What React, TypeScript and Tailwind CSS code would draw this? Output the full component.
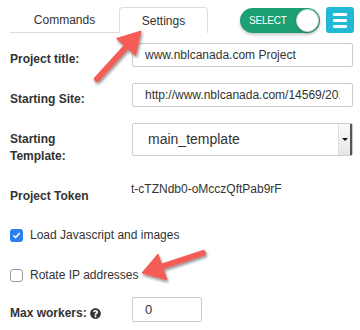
import { FaQuestionCircle } from 'react-icons/fa'

function Arrows() {
    return (
        <svg className="absolute inset-0 pointer-events-none" width={360} height={330} viewBox="0 0 360 330">
            <defs>
                <filter id="arrowShadow" x="-20%" y="-20%" width="140%" height="140%">
                    <feDropShadow dx="1" dy="2" stdDeviation="1.5" floodColor="#000" floodOpacity="0.45" />
                </filter>
            </defs>
            <g filter="url(#arrowShadow)" fill="#f45c57" stroke="#f45c57">
                {/* arrow to Settings tab */}
                <line x1={97} y1={79} x2={127} y2={46} strokeWidth={6} strokeLinecap="round" />
                <polygon points="141,31 135.5,55.5 116.5,38.5" strokeWidth={1} strokeLinejoin="round" />
                {/* arrow to Rotate IP */}
                <line x1={203} y1={253} x2={162} y2={266.5} strokeWidth={6} strokeLinecap="round" />
                <polygon points="142,273 158,254 167,280" strokeWidth={1} strokeLinejoin="round" />
            </g>
        </svg>
    )
}

export default function App() {
    return (
        <div
            className="relative w-[360px] h-[330px] overflow-hidden bg-white text-[#333] pt-[7px]"
            style={{ fontFamily: '"Liberation Sans", Arial, sans-serif' }}
        >
            {/* header */}
            <div className="flex items-start pl-[10px]">
                <div className="flex border-b border-[#ddd]">
                    <div className="w-[109px] h-[25px] flex items-center justify-center text-[12px]">Commands</div>
                    <div className="w-[89px] h-[26px] -mb-px flex items-center justify-center text-[12px] bg-white border border-b-0 border-[#ddd] rounded-t-[4px]">
                        Settings
                    </div>
                </div>
                <div className="ml-[32px] mt-[1px] w-[80px] h-[25px] rounded-full bg-[#1d9f74] flex items-center shadow-[0_2px_3px_rgba(0,0,0,0.2)]">
                    <span className="pl-[9px] text-[10px] text-white tracking-[-0.2px]">SELECT</span>
                    <span className="ml-auto mr-[1px] w-[23px] h-[23px] rounded-full bg-white border border-[#cfd8d4] shadow-[0_1px_2px_rgba(0,0,0,0.2)]" />
                </div>
                <button
                    type="button"
                    className="ml-[6px] w-[28px] h-[26px] rounded-[3px] bg-[#21b8d3] flex flex-col items-center justify-center gap-[3px]"
                >
                    <span className="w-[14px] h-[3px] bg-white rounded-[1px]" />
                    <span className="w-[14px] h-[3px] bg-white rounded-[1px]" />
                    <span className="w-[14px] h-[3px] bg-white rounded-[1px]" />
                </button>
            </div>

            {/* form */}
            <div className="pl-[10px] mt-[10px]">
                <div className="flex items-start">
                    <label className="w-[122px] pt-[9px] text-[12px] leading-[14px] font-bold">Project title:</label>
                    <input
                        readOnly
                        value="www.nblcanada.com Project"
                        className="w-[221px] h-[24px] px-[12px] border border-[#ccc] rounded-[2px] text-[12px] outline-none"
                    />
                </div>

                <div className="flex items-start mt-[16px]">
                    <label className="w-[122px] pt-[9px] text-[12px] leading-[14px] font-bold">Starting Site:</label>
                    <input
                        readOnly
                        value="http://www.nblcanada.com/14569/2016/"
                        className="w-[221px] h-[24px] px-[12px] border border-[#ccc] rounded-[2px] text-[12px] outline-none"
                    />
                </div>

                <div className="flex items-start mt-[16px]">
                    <label className="w-[122px] pt-[8px] text-[12px] leading-[17px] font-bold">
                        Starting
                        <br />
                        Template:
                    </label>
                    <div className="w-[221px] h-[33px] flex items-stretch border border-[#ccc] rounded-[2px]">
                        <span className="flex-1 flex items-center pl-[15px] text-[14px]">main_template</span>
                        <span className="w-[14px] flex items-center justify-center bg-gradient-to-b from-[#fafafa] to-[#e6e6e6] border-l border-[#ddd] border-r-2 border-r-[#555]">
                            <span className="w-0 h-0 border-l-[3px] border-r-[3px] border-t-[3px] border-l-transparent border-r-transparent border-t-[#111]" />
                        </span>
                    </div>
                </div>

                <div className="flex items-start mt-[17px]">
                    <label className="w-[121px] pt-[7px] text-[12px] leading-[14px] font-bold">Project Token</label>
                    <span className="text-[12px] leading-[14px]">t-cTZNdb0-oMcczQftPab9rF</span>
                </div>

                <label className="flex items-center gap-[7px] mt-[25px] h-[14px] text-[12px]">
                    <span className="w-[13px] h-[13px] rounded-[3px] bg-[#2d7ff0] flex items-center justify-center">
                        <svg width="9" height="9" viewBox="0 0 9 9">
                            <path d="M1.8 4.8 L3.7 6.6 L7.2 2.4" fill="none" stroke="white" strokeWidth="1.5" strokeLinecap="round" strokeLinejoin="round" />
                        </svg>
                    </span>
                    Load Javascript and images
                </label>

                <label className="flex items-center gap-[7px] mt-[26px] h-[14px] text-[12px]">
                    <span className="w-[13px] h-[13px] rounded-[3px] bg-white border border-[#9a9a9a]" />
                    Rotate IP addresses
                </label>

                <div className="flex items-start mt-[15px]">
                    <label className="w-[122px] pt-[9px] text-[12px] leading-[14px] font-bold flex items-center gap-[3px]">
                        Max workers:
                        <FaQuestionCircle className="w-[11px] h-[11px] text-[#333]" />
                    </label>
                    <input
                        readOnly
                        value="0"
                        className="w-[70px] h-[25px] px-[12px] border border-[#ccc] rounded-[2px] text-[13px] outline-none"
                    />
                </div>
            </div>

            <Arrows />
        </div>
    )
}
